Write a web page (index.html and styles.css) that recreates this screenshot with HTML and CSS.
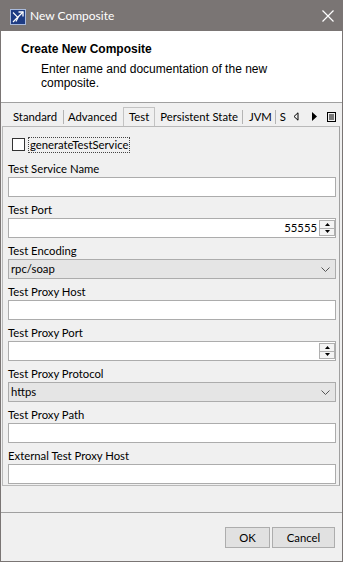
FILE: index.html
```html
<!DOCTYPE html>
<html>
<head>
<meta charset="utf-8">
<link rel="stylesheet" href="styles.css">
</head>
<body>
<div class="window">
  <div class="titlebar">
    <svg class="app-icon" width="16" height="16" viewBox="0 0 16 16">
      <rect x="0.5" y="0.5" width="15" height="15" fill="#1e3c84" stroke="#a9bbdd"/>
      <path d="M3 13 L13 3" stroke="#fff" stroke-width="1.3" fill="none"/>
      <path d="M8.5 3 H13 V7.5" stroke="#fff" stroke-width="1.3" fill="none"/>
      <path d="M3 3.5 L8 8.5 L6 12.5" stroke="#fff" stroke-width="1.1" fill="none"/>
    </svg>
    <span class="title">New Composite</span>
    <svg class="close" width="12" height="12" viewBox="0 0 12 12">
      <path d="M0.5 0.5 L11.5 11.5 M11.5 0.5 L0.5 11.5" stroke="#fff" stroke-width="1.2" fill="none"/>
    </svg>
  </div>
  <div class="header">
    <div class="h-title">Create New Composite</div>
    <div class="h-desc">Enter name and documentation of the new<br>composite.</div>
  </div>
  <div class="tabs">
    <div class="tab-list">
      <span class="tab t-standard">Standard</span>
      <span class="tab-sep"></span>
      <span class="tab t-advanced">Advanced</span>
      <span class="tab tab-active">Test</span>
      <span class="tab t-persistent">Persistent State</span>
      <span class="tab-sep"></span>
      <span class="tab t-jvm">JVM</span>
      <span class="tab-sep"></span>
      <span class="tab t-s">S</span>
    </div>
    <div class="tab-controls">
      <svg class="tab-prev" width="6" height="9" viewBox="0 0 6 9"><path d="M5 0.8 L1 4.5 L5 8.2 Z" fill="none" stroke="#000"/></svg>
      <svg class="tab-next" width="5" height="9" viewBox="0 0 5 9"><path d="M0 0 L5 4.5 L0 9 Z" fill="#000"/></svg>
      <svg class="tab-menu" width="9" height="10" viewBox="0 0 9 10"><rect x="0.5" y="0.5" width="8" height="9" fill="none" stroke="#000"/><path d="M2 3h5M2 5h5M2 7h5" stroke="#000"/></svg>
    </div>
  </div>
  <div class="panel">
    <div class="check-row">
      <span class="checkbox"></span>
      <span class="check-label">generateTestService</span>
    </div>
    <div class="field">
      <div class="label">Test Service Name</div>
      <div class="input"></div>
    </div>
    <div class="field">
      <div class="label">Test Port</div>
      <div class="input spin-input">
        <span class="spin-value">55555</span>
        <span class="spinner"><span class="spin-btn"><svg width="5" height="3" viewBox="0 0 5 3"><path d="M0 3 L2.5 0 L5 3Z" fill="#000"/></svg></span><span class="spin-btn"><svg width="5" height="3" viewBox="0 0 5 3"><path d="M0 0 L2.5 3 L5 0Z" fill="#000"/></svg></span></span>
      </div>
    </div>
    <div class="field">
      <div class="label">Test Encoding</div>
      <div class="select"><span class="select-value">rpc/soap</span><svg class="chevron" width="9" height="5" viewBox="0 0 9 5"><path d="M0.5 0.5 L4.5 4.5 L8.5 0.5" stroke="#555" fill="none"/></svg></div>
    </div>
    <div class="field">
      <div class="label">Test Proxy Host</div>
      <div class="input"></div>
    </div>
    <div class="field">
      <div class="label">Test Proxy Port</div>
      <div class="input spin-input">
        <span class="spin-value"></span>
        <span class="spinner"><span class="spin-btn"><svg width="5" height="3" viewBox="0 0 5 3"><path d="M0 3 L2.5 0 L5 3Z" fill="#000"/></svg></span><span class="spin-btn"><svg width="5" height="3" viewBox="0 0 5 3"><path d="M0 0 L2.5 3 L5 0Z" fill="#000"/></svg></span></span>
      </div>
    </div>
    <div class="field">
      <div class="label">Test Proxy Protocol</div>
      <div class="select"><span class="select-value">https</span><svg class="chevron" width="9" height="5" viewBox="0 0 9 5"><path d="M0.5 0.5 L4.5 4.5 L8.5 0.5" stroke="#555" fill="none"/></svg></div>
    </div>
    <div class="field">
      <div class="label">Test Proxy Path</div>
      <div class="input"></div>
    </div>
    <div class="field">
      <div class="label">External Test Proxy Host</div>
      <div class="input"></div>
    </div>
  </div>
  <div class="spacer"></div>
  <div class="footer">
    <button class="btn btn-ok">OK</button>
    <button class="btn btn-cancel">Cancel</button>
  </div>
</div>
</body>
</html>
```

FILE: styles.css
```css
html, body {
  margin: 0;
  padding: 0;
}
body {
  width: 343px;
  height: 562px;
  font-family: Lato, "Liberation Sans", sans-serif;
  font-size: 11.3px;
  color: #000;
  background: #f0f0f0;
  overflow: hidden;
}
.window {
  box-sizing: border-box;
  width: 343px;
  height: 562px;
  border: 1px solid #7a7574;
  display: flex;
  flex-direction: column;
  background: #f0f0f0;
}
.titlebar {
  flex: none;
  height: 30px;
  background: #7a7574;
  display: flex;
  align-items: center;
  padding: 0 8px 0 9px;
  color: #fff;
}
.app-icon {
  flex: none;
  margin-top: 1px;
}
.title {
  margin-left: 4px;
  font-size: 12px;
  line-height: 16px;
}
.close {
  margin-left: auto;
}
.header {
  flex: none;
  box-sizing: border-box;
  background: #fff;
  border-bottom: 1px solid #a0a0a0;
  height: 72px;
  padding: 11px 0 0 20px;
  font-family: "Liberation Sans", Arial, sans-serif;
  font-size: 12px;
  line-height: 14px;
}
.h-title {
  font-weight: bold;
}
.h-desc {
  margin-top: 6px;
  margin-left: 20px;
}
.tabs {
  flex: none;
  height: 23px;
  display: flex;
  align-items: flex-end;
  background: #f0f0f0;
}
.tab-list {
  display: flex;
  align-items: center;
  width: 288px;
  overflow: hidden;
  padding-left: 6px;
  box-sizing: border-box;
  height: 19px;
  flex: none;
}
.tab {
  line-height: 19px;
  height: 19px;
  white-space: nowrap;
  padding: 0 6px;
  box-sizing: border-box;
  flex: none;
}
.t-advanced {
  padding: 0 6px 0 4px;
}
.tab-active {
  border: 1px solid #c3c3c3;
  border-bottom: none;
  padding: 0 5px;
  line-height: 18px;
  background: #f0f0f0;
}
.t-persistent {
  padding: 0 4px 0 5px;
}
.t-jvm {
  padding: 0 3px 0 6px;
}
.t-s {
  padding: 0 4px;
}
.tab-sep {
  flex: none;
  width: 1px;
  height: 14px;
  background: #b4b4b4;
}
.tab-controls {
  display: flex;
  align-items: center;
  height: 19px;
  padding-left: 4px;
}
.tab-prev {
  margin-right: 13px;
}
.tab-next {
  margin-right: 10px;
}
.panel {
  flex: none;
  box-sizing: border-box;
  height: 360px;
  margin: 0 2px 0 1px;
  border: 1px solid #b9b9b9;
  border-right-color: #a0a0a0;
  padding: 6px 3px 0 5px;
  overflow: hidden;
}
.check-row {
  height: 23px;
  display: flex;
  align-items: center;
}
.checkbox {
  box-sizing: border-box;
  width: 13px;
  height: 13px;
  border: 1px solid #333;
  background: #fff;
  margin-left: 4px;
}
.check-label {
  margin-left: 3px;
  padding: 0 1px;
  border: 1px dotted #444;
  line-height: 14px;
}
.field {
  display: flex;
  flex-direction: column;
}
.label {
  height: 21px;
  box-sizing: border-box;
  padding-top: 5px;
  line-height: 15px;
}
.input, .select {
  box-sizing: border-box;
  height: 20px;
  border: 1px solid #acacac;
  background: #fff;
}
.spin-input {
  display: flex;
  align-items: stretch;
}
.spin-value {
  flex: 1;
  text-align: right;
  line-height: 18px;
  padding-right: 2px;
}
.spinner {
  flex: none;
  width: 16px;
  display: flex;
  flex-direction: column;
  box-sizing: border-box;
  padding: 1px 0 1px 0;
}
.spin-btn {
  flex: 1;
  display: flex;
  align-items: center;
  justify-content: center;
  border: 1px solid #b0b0b0;
  background: #f4f4f4;
}
.spin-btn + .spin-btn {
  border-top: none;
}
.select {
  background: #e5e5e5;
  display: flex;
  align-items: center;
  padding: 0 5px 0 2px;
}
.select-value {
  flex: 1;
  line-height: 18px;
}
.chevron {
  flex: none;
  margin-top: 1px;
}
.spacer {
  flex: none;
  height: 26px;
}
.footer {
  flex: 1;
  border-top: 1px solid #a0a0a0;
  display: flex;
  justify-content: flex-end;
  align-items: flex-start;
  padding: 14px 7px 0 0;
  gap: 2px;
}
.btn {
  font-family: Lato, "Liberation Sans", sans-serif;
  font-size: 11.3px;
  color: #000;
  height: 21px;
  background: #e1e1e1;
  border: 1px solid #adadad;
  padding: 0;
  margin: 0;
  line-height: 19px;
}
.btn-ok {
  width: 45px;
}
.btn-cancel {
  width: 63px;
}
```
